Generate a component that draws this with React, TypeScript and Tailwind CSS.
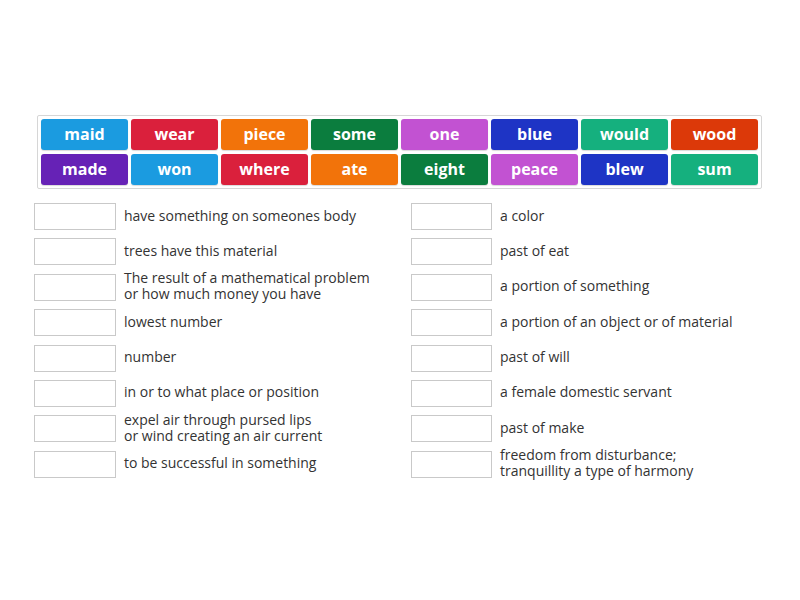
const tiles: { word: string; color: string }[] = [
  { word: "maid", color: "bg-[#1b9be0]" },
  { word: "wear", color: "bg-[#da203c]" },
  { word: "piece", color: "bg-[#f2730a]" },
  { word: "some", color: "bg-[#0b7d3e]" },
  { word: "one", color: "bg-[#c252d2]" },
  { word: "blue", color: "bg-[#1e34c5]" },
  { word: "would", color: "bg-[#15b07e]" },
  { word: "wood", color: "bg-[#dc3909]" },
  { word: "made", color: "bg-[#6622b6]" },
  { word: "won", color: "bg-[#1b9be0]" },
  { word: "where", color: "bg-[#da203c]" },
  { word: "ate", color: "bg-[#f2730a]" },
  { word: "eight", color: "bg-[#0b7d3e]" },
  { word: "peace", color: "bg-[#c252d2]" },
  { word: "blew", color: "bg-[#1e34c5]" },
  { word: "sum", color: "bg-[#15b07e]" },
];

const leftClues: string[][] = [
  ["have something on someones body"],
  ["trees have this material"],
  ["The result of a mathematical problem", "or how much money you have"],
  ["lowest number"],
  ["number"],
  ["in or to what place or position"],
  ["expel air through pursed lips", "or wind creating an air current"],
  ["to be successful in something"],
];

const rightClues: string[][] = [
  ["a color"],
  ["past of eat"],
  ["a portion of something"],
  ["a portion of an object or of material"],
  ["past of will"],
  ["a female domestic servant"],
  ["past of make"],
  ["freedom from disturbance;", "tranquillity a type of harmony"],
];

const ClueColumn = ({ clues, boxWidth }: { clues: string[][]; boxWidth: string }) => (
  <div className="flex flex-col gap-[8.4px]">
    {clues.map((lines, index) => (
      <div key={index} className="flex items-center h-[27px]">
        <div className={`${boxWidth} h-[27px] border border-[#c9c9c9] bg-white shrink-0`}></div>
        <div className="ml-[8px] text-[14px] leading-[16px] text-[#333333] -mt-[2px]">
          {lines.map((line, i) => (
            <div key={i}>{line}</div>
          ))}
        </div>
      </div>
    ))}
  </div>
);

export default function App() {
  return (
    <div
      className="w-[800px] h-[600px] bg-white"
      style={{ fontFamily: '"Open Sans", "Liberation Sans", sans-serif' }}
    >
      <div className="pt-[115px] pl-[37px]">
        <div className="w-[725px] border border-[#d6d6d6] rounded-[2px] p-[3px] grid grid-cols-8 gap-x-[3px] gap-y-[4px]">
          {tiles.map((tile) => (
            <div
              key={tile.word}
              className={`${tile.color} h-[31px] rounded-[3px] flex items-center justify-center text-white font-bold text-[16px] pb-[1px] shadow-[0_1px_1px_rgba(0,0,0,0.15)]`}
            >
              {tile.word}
            </div>
          ))}
        </div>
      </div>
      <div className="flex mt-[14px] pl-[34px]">
        <div className="w-[377px]">
          <ClueColumn clues={leftClues} boxWidth="w-[82px]" />
        </div>
        <div>
          <ClueColumn clues={rightClues} boxWidth="w-[81px]" />
        </div>
      </div>
    </div>
  );
}
